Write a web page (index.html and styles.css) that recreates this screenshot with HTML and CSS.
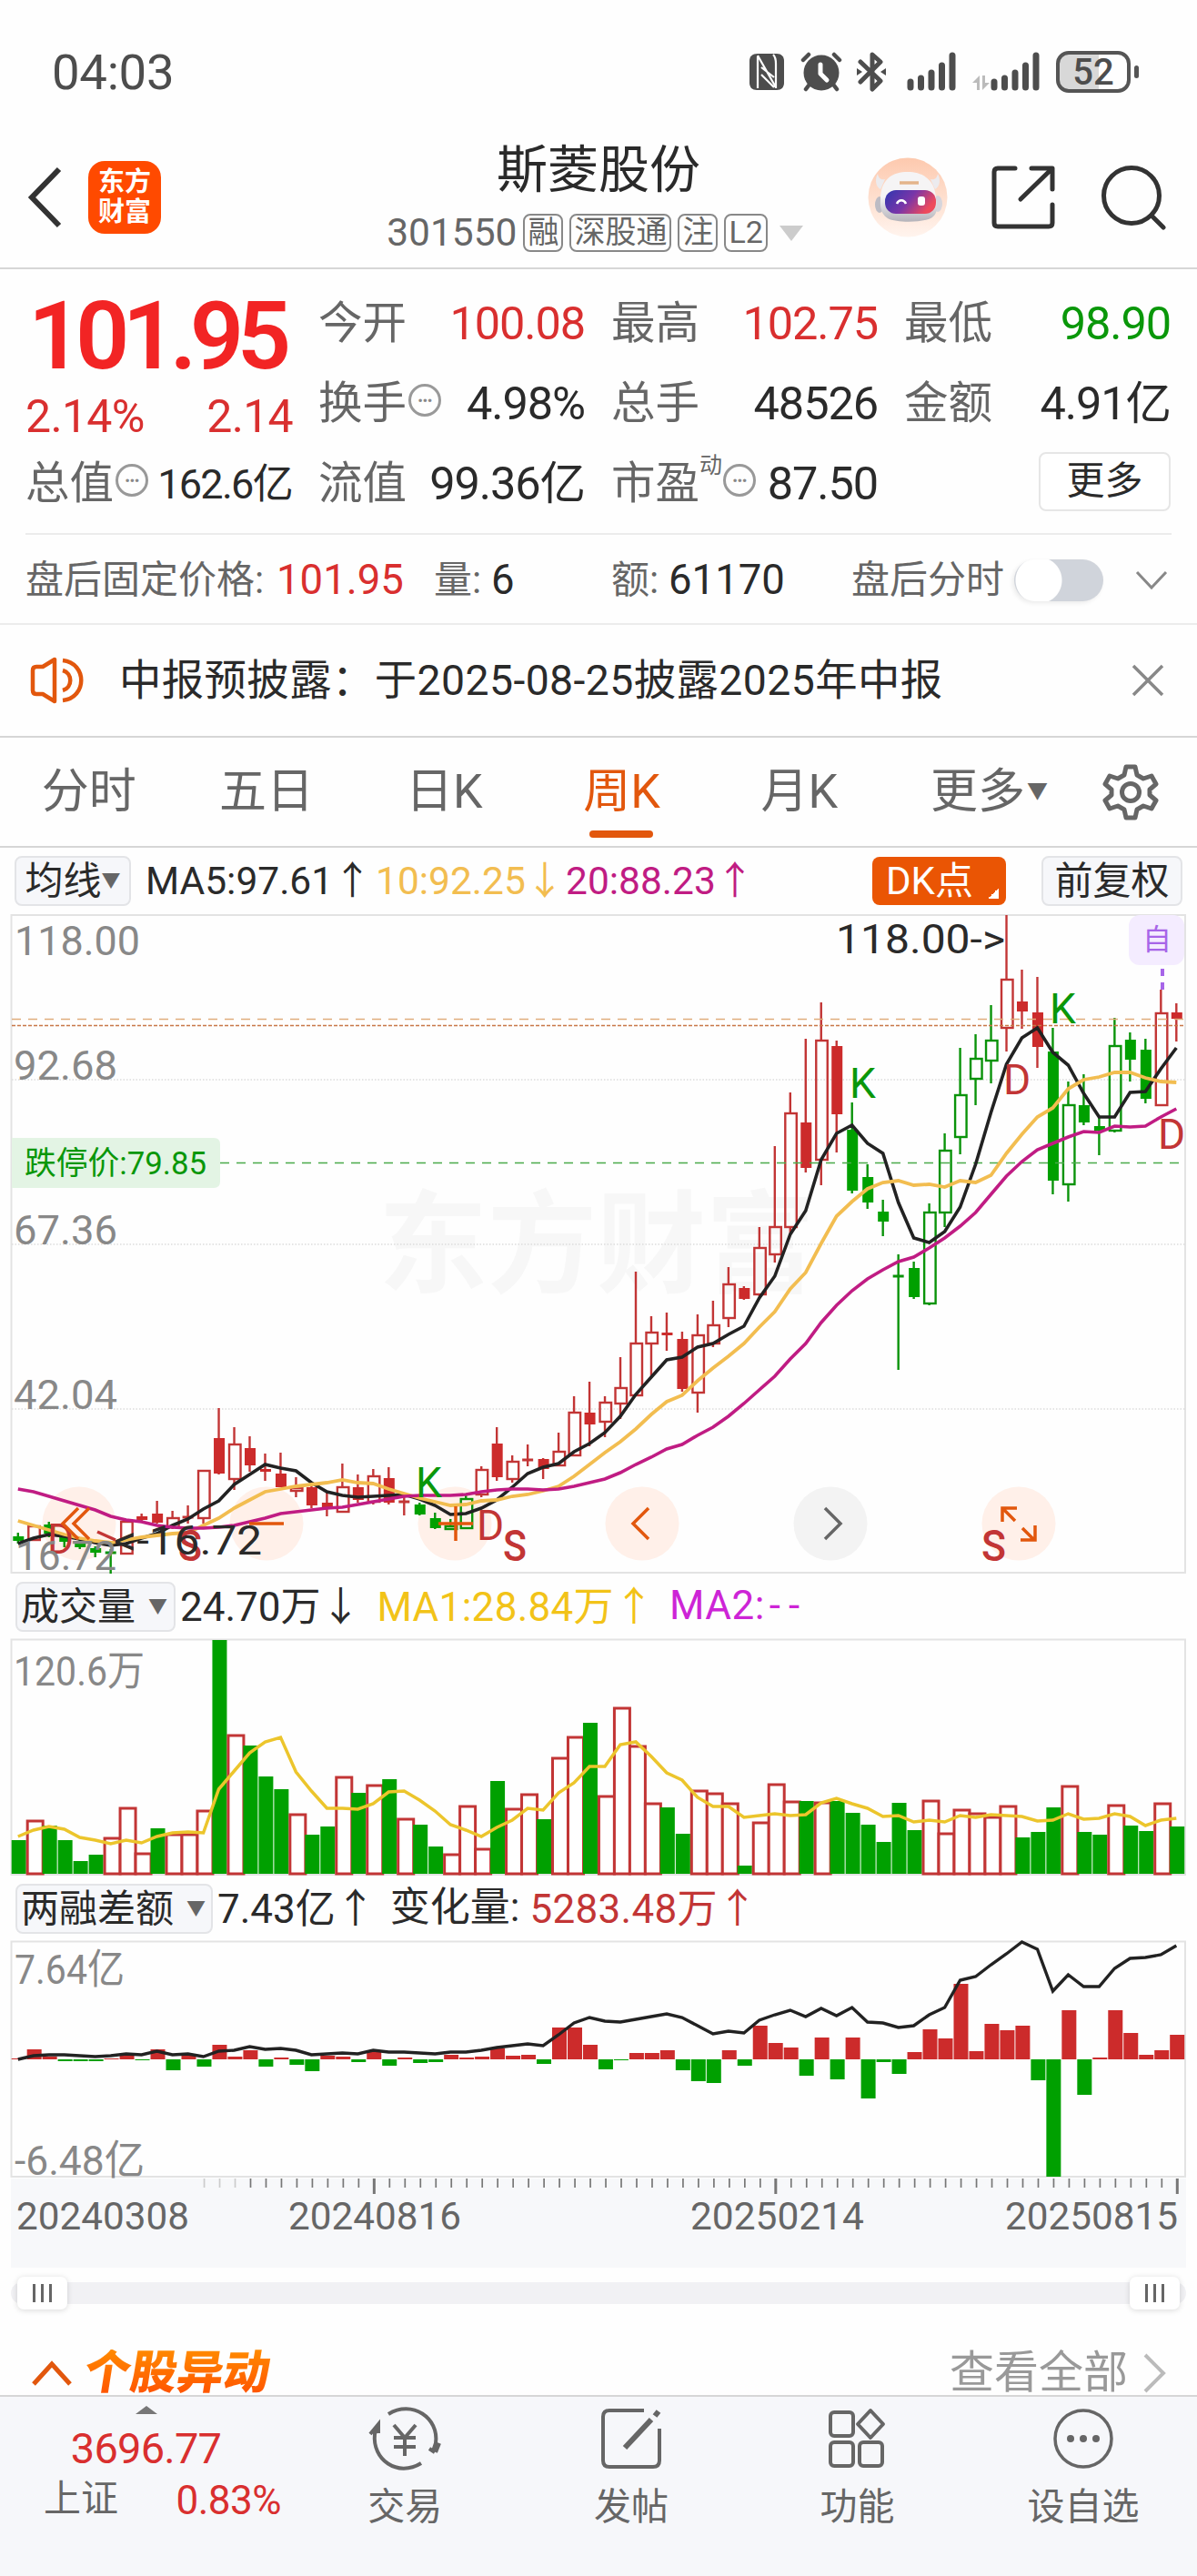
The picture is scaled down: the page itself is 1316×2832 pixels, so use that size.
FILE: index.html
```html
<!DOCTYPE html>
<html lang="zh-CN">
<head>
    <meta charset="UTF-8">
    <title>斯菱股份 301550</title>
    <link rel="stylesheet" href="styles.css">
</head>
<body>
    <div class="status">
        <span class="time">04:03</span>
        <svg class="nfc" width="40" height="42" viewBox="0 0 40 42">
            <path fill="#4d4d4d" d="M10 1h21c5 0 8 3 8 8v24c0 5-3 8-8 8H9c-5 0-8-3-8-8V9c0-5 3-8 9-8z"/>
            <path stroke="#fff" stroke-width="2.200" fill="none" d="M10 4v35M30 39V12c0-5-1-8-3-10M10 3l20 35M14 16l14 11M14 24l14 14"/>
        </svg>
        <svg class="alarm" width="46" height="44" viewBox="0 0 46 44">
            <circle cx="23" cy="23" r="19.500" fill="#4d4d4d"/>
            <path stroke="#4d4d4d" stroke-width="4.500" stroke-linecap="round" fill="none" d="M3 9l6-6M43 9l-6-6M9 37l-3 4M37 37l3 4"/>
            <path stroke="#fff" stroke-width="5" stroke-linecap="round" stroke-linejoin="round" fill="none" d="M22 14v10l7 7"/>
        </svg>
        <svg class="bt" width="32" height="44" viewBox="0 0 32 44">
            <path stroke="#4d4d4d" stroke-width="5" stroke-linejoin="round" stroke-linecap="round" fill="none" d="M4 11l22 21-9 9V3l9 8L4 33"/>
            <path fill="#4d4d4d" d="M0 18l6 4-6 4zM32 18l-6 4 6 4z"/>
        </svg>
        <svg class="sig" width="54" height="44" viewBox="0 0 54 44">
            <path stroke="#4d4d4d" stroke-width="7" stroke-linecap="round" d="M4 33v6M15.500 29v10M27 23v16M38.500 15v24M50 4v35"/>
        </svg>
        <svg class="sig2" width="74" height="44" viewBox="0 0 74 44">
            <path fill="#bbb" d="M0 34l8-8v16H5v-8zM11 26h3v8h5l-8 8z"/>
            <path stroke="#4d4d4d" stroke-width="7" stroke-linecap="round" d="M24 33v6M35.500 29v10M47 23v16M58.500 15v24M70 4v35"/>
        </svg>
        <span class="battery">52</span><i class="nub"></i>
    </div>

    <div class="head">
        <svg class="back" width="40" height="68" viewBox="0 0 40 68">
            <path fill="none" stroke="#333" stroke-width="6" d="M35 3L5 34l30 31"/>
        </svg>
        <div class="logo">东方<br>财富</div>
        <div class="name">
            <h1>斯菱股份</h1>
            <div class="code">301550<b>融</b><b>深股通</b><b>注</b><b>L2</b><i class="tri"></i></div>
        </div>
        <svg class="robot" width="88" height="88" viewBox="0 0 88 88">
            <defs>
                <linearGradient id="halo" x1="0" y1="0" x2="0" y2="1"><stop offset="0" stop-color="#fdc9ae"/><stop offset="1" stop-color="#fff4ee"/></linearGradient>
                <linearGradient id="face" x1="0" y1="0" x2="1" y2=".4"><stop offset="0" stop-color="#2f37b0"/><stop offset=".55" stop-color="#7a35a8"/><stop offset="1" stop-color="#ee4a5c"/></linearGradient>
                <linearGradient id="shell" x1="0" y1="0" x2="0" y2="1"><stop offset=".5" stop-color="#f5f4f5"/><stop offset="1" stop-color="#b4b3ba"/></linearGradient>
            </defs>
            <circle cx="44" cy="44" r="43.500" fill="url(#halo)"/>
            <ellipse cx="13" cy="52" rx="5" ry="9" fill="#bdbcc4"/>
            <ellipse cx="77" cy="51" rx="5" ry="9" fill="#d6d5dc"/>
            <path d="M14 35c-6-3-6-12-3-17 1 5 3 7 8 6zM74 35c6-3 6-12 3-17-1 5-3 7-8 6z" fill="#ecebee"/>
            <path d="M14 47c0-24 14-31 30-31s31 8 31 31c3 14-2 18-6 20-10 5-38 5-47 0-5-3-9-9-8-20z" fill="url(#shell)"/>
            <rect x="19" y="36" width="56" height="26" rx="12" fill="url(#face)"/>
            <path d="M32 51c2-5 8-5 10 0" fill="none" stroke="#fff" stroke-width="2.500"/>
            <rect x="55" y="43" width="8" height="10" rx="3" fill="#fff"/>
            <path d="M35 28h21" stroke="#e3b48a" stroke-width="3.500"/>
        </svg>
        <svg class="share" width="70" height="70" viewBox="0 0 70 70">
            <path fill="none" stroke="#333" stroke-width="5" stroke-linejoin="round" stroke-linecap="round" d="M26 3H7q-4 0-4 4v56q0 4 4 4h56q4 0 4-4V43M44 3h23v23M66 4L32 37"/>
        </svg>
        <svg class="search" width="72" height="72" viewBox="0 0 72 72">
            <circle cx="33" cy="33" r="30.500" fill="none" stroke="#333" stroke-width="5"/>
            <path stroke="#333" stroke-width="5" stroke-linecap="round" d="M55 55l13 13"/>
        </svg>
    </div>

    <div class="quote">
        <div class="price">
            <strong>101.95</strong>
            <p><span>2.14%</span><span>2.14</span></p>
        </div>
        <div class="cell"><label>今开</label><span class="red">100.08</span></div>
        <div class="cell"><label>最高</label><span class="red">102.75</span></div>
        <div class="cell"><label>最低</label><span class="green">98.90</span></div>
        <div class="cell"><label>换手<i class="info">•••</i></label><span>4.98%</span></div>
        <div class="cell"><label>总手</label><span>48526</span></div>
        <div class="cell"><label>金额</label><span>4.91亿</span></div>
        <div class="cell"><label>总值<i class="info">•••</i></label><span class="small">162.6亿</span></div>
        <div class="cell"><label>流值</label><span>99.36亿</span></div>
        <div class="cell"><label>市盈<sup>动</sup><i class="info">•••</i></label><span>87.50</span></div>
        <div class="cell end"><button class="more">更多</button></div>
    </div>

    <div class="after">
        <label class="a1">盘后固定价格:</label><span class="a2 red">101.95</span>
        <label class="a3">量:</label><span class="a4">6</span>
        <label class="a5">额:</label><span class="a6">61170</span>
        <label class="a7">盘后分时</label><i class="toggle"></i>
        <svg width="36" height="22" viewBox="0 0 36 22"><path fill="none" stroke="#888" stroke-width="3" d="M2 2l16 17L34 2"/></svg>
    </div>

    <div class="notice">
        <svg width="60" height="52" viewBox="0 0 60 52">
            <path fill="none" stroke="#e2570d" stroke-width="4.500" stroke-linejoin="round" d="M3 15q0-4 4-4h7L27 3v46L14 41H7q-4 0-4-4zM36 15c11 3 11 19 0 22M36 4c27 3 27 41 0 44"/>
        </svg>
        <span>中报预披露：于2025-08-25披露2025年中报</span>
        <svg width="36" height="36" viewBox="0 0 36 36"><path stroke="#888" stroke-width="3.500" d="M2 2l32 32M34 2L2 34"/></svg>
    </div>

    <div class="tabs">
        <span>分时</span><span>五日</span><span>日K</span><span class="on">周K</span><span>月K</span><span>更多<i>▼</i></span>
        <svg width="64" height="64" viewBox="0 0 64 64">
            <path fill="none" stroke="#666" stroke-width="5" stroke-linejoin="round" d="M27 4h10l2 9 7 4 9-3 5 9-7 6v6l7 6-5 9-9-3-7 4-2 9H27l-2-9-7-4-9 3-5-9 7-6v-6l-7-6 5-9 9 3 7-4z"/>
            <circle cx="32" cy="32" r="9.500" fill="none" stroke="#666" stroke-width="5"/>
        </svg>
    </div>

    <div class="bar ma">
        <button>均线<i>▼</i></button>
        <span class="m5">MA5:97.61<u>↑</u></span>
        <span class="m10">10:92.25<u>↓</u></span>
        <span class="m20">20:88.23<u>↑</u></span>
        <button class="dk">DK点</button>
        <button class="fq">前复权</button>
    </div>
    <svg id="kline" class="chart" width="1316" height="726" viewBox="0 1005 1316 726"></svg>

    <div class="bar vol">
        <button>成交量<i>▼</i></button>
        <span>24.70万<u>↓</u></span>
        <span class="v1">MA1:28.84万<u>↑</u></span>
        <span class="v2">MA2:<em>--</em></span>
    </div>
    <svg id="volume" class="chart" width="1316" height="262" viewBox="0 1801 1316 262"></svg>

    <div class="bar diff">
        <button>两融差额<i>▼</i></button>
        <span>7.43亿<u>↑</u></span>
        <span class="d1">变化量:</span>
        <span class="d2">5283.48万<u>↑</u></span>
    </div>
    <svg id="margin" class="chart" width="1316" height="360" viewBox="0 2133 1316 360"></svg>

    <div class="slider"><i></i><i></i></div>

    <div class="title">
        <svg width="46" height="30" viewBox="0 0 46 30"><path fill="none" stroke="#e2570d" stroke-width="5" d="M3 27L23 5l20 22"/></svg>
        <h2>个股异动</h2>
        <span>查看全部</span>
        <svg class="go" width="26" height="44" viewBox="0 0 26 44"><path fill="none" stroke="#bbb" stroke-width="4" d="M3 2l20 20L3 42"/></svg>
    </div>

    <div class="nav">
        <div class="index">
            <i></i>
            <b>3696.77</b>
            <p><span>上证</span><em>0.83%</em></p>
        </div>
        <div class="item">
            <svg width="80" height="70" viewBox="0 0 80 70">
                <g fill="none" stroke="#666" stroke-width="4">
                    <path d="M22 8c26-16 56 4 52 32l-3 9M74 50l4-10M73 50l-6-4M58 62C32 78 4 58 7 30l3-9M2 30l9-11v10"/>
                    <path d="M28 20l12 14 12-14M40 34v20M28 34h24M28 44h24"/>
                </g>
            </svg>
            <span>交易</span>
        </div>
        <div class="item">
            <svg width="80" height="70" viewBox="0 0 80 70">
                <path fill="none" stroke="#666" stroke-width="4" d="M54 4H16q-7 0-7 7v48q0 7 7 7h48q7 0 7-7V24"/>
                <path stroke="#666" stroke-width="6" d="M33 45L62 14M66 10l4-5"/>
            </svg>
            <span>发帖</span>
        </div>
        <div class="item">
            <svg width="80" height="70" viewBox="0 0 80 70">
                <g fill="none" stroke="#666" stroke-width="4">
                    <rect x="11" y="6" width="25" height="26" rx="4"/><rect x="11" y="39" width="25" height="26" rx="4"/><rect x="43" y="39" width="25" height="26" rx="4"/>
                    <path stroke-linejoin="round" d="M55 4l14 15-14 15-14-15z"/>
                </g>
            </svg>
            <span>功能</span>
        </div>
        <div class="item">
            <svg width="80" height="70" viewBox="0 0 80 70">
                <circle cx="40" cy="35" r="31" fill="none" stroke="#666" stroke-width="3.500"/>
                <g fill="#666"><circle cx="26" cy="35" r="4"/><circle cx="40" cy="35" r="4"/><circle cx="54" cy="35" r="4"/></g>
            </svg>
            <span>设自选</span>
        </div>
    </div>
    <script src="chart.js"></script>
</body>
</html>
```
FILE: styles.css
```css
* {
    box-sizing: border-box;
}
body {
    margin: 0;
    width: 1316px;
    height: 2832px;
    overflow: hidden;
    background: #fefefe;
    color: #2a2a2a;
    font-family: Roboto, "Noto Sans CJK SC", sans-serif;
    line-height: 1;
}
h1, h2, p {
    margin: 0;
    font-weight: normal;
}
i, em {
    font-style: normal;
}
u {
    text-decoration: none;
}
button {
    font-family: inherit;
    color: inherit;
    padding: 0;
    margin: 0;
    white-space: nowrap;
}
span, label {
    white-space: nowrap;
}
svg {
    display: block;
    flex: none;
}
.red { color: #d92f2f; }
.green { color: #0a970a; }

/* status bar */
.status {
    display: flex;
    align-items: center;
    height: 157px;
    padding-left: 57px;
    color: #4d4d4d;
}
.time {
    width: 766px;
    font-size: 54.500px;
    letter-spacing: -0.3px;
    padding-top: 2px;
}
.alarm { margin-left: 17px; }
.bt { margin-left: 16px; }
.sig { margin-left: 23px; }
.sig2 { margin-left: 18px; }
.battery {
    width: 82px;
    height: 46px;
    margin-left: 18px;
    border: 4px solid #555;
    border-radius: 14px;
    background: linear-gradient(90deg, #d8d8d8 58%, #fefefe 58%);
    text-align: center;
    font-size: 40px;
    font-weight: 500;
    line-height: 40px;
}
.nub {
    width: 5px;
    height: 14px;
    margin-left: 4px;
    border-radius: 3px;
    background: #555;
}

/* header */
.head {
    display: flex;
    align-items: center;
    height: 139px;
    padding-left: 30px;
    border-bottom: 2px solid #d6d6d6;
}
.back { margin-top: -17px; }
.logo {
    width: 80px;
    height: 80px;
    margin: -17px 0 0 27px;
    padding-top: 7px;
    border-radius: 18px;
    background: #ff4a00;
    color: #fff;
    font-size: 29px;
    font-weight: 700;
    line-height: 33px;
    text-align: center;
}
.name {
    width: 530px;
    margin-left: 212px;
    align-self: flex-start;
    padding-top: 1px;
}
.name h1 {
    width: 538px;
    text-align: center;
    font-size: 56px;
    line-height: 58px;
}
.code {
    display: flex;
    align-items: center;
    justify-content: center;
    margin-top: 18px;
    height: 44px;
    font-size: 42.500px;
    color: #666;
}
.code b {
    height: 42px;
    margin-left: 7px;
    padding: 0 3px;
    border: 2px solid #888;
    border-radius: 8px;
    font-size: 34px;
    font-weight: normal;
    line-height: 37px;
}
.tri {
    margin-left: 13px;
    border: 13px solid transparent;
    border-top: 17px solid #ccc;
    border-bottom: 0;
}
.robot { margin: -17px 0 0 35px; }
.share { margin: -17px 0 0 48px; }
.search { margin: -15px 0 0 51px; }

/* quote grid */
.quote {
    display: grid;
    grid-template-columns: repeat(4, 291px);
    grid-template-rows: 88px 88px 88px;
    column-gap: 31px;
    height: 292px;
    margin: 0 28px;
    padding-top: 15px;
    border-bottom: 2px solid #ececec;
}
.price {
    grid-row: span 2;
    color: #f22424;
}
.price strong {
    display: block;
    padding: 17px 0 0 3px;
    font-size: 104px;
    font-weight: 600;
    line-height: 84px;
    letter-spacing: -7.500px;
}
.price p {
    display: flex;
    justify-content: space-between;
    margin: 20px -3px 0 0;
    color: #d92f2f;
    font-size: 50px;
    line-height: 52px;
    letter-spacing: -0.7px;
}
.cell {
    display: flex;
    align-items: center;
    justify-content: space-between;
    margin-right: -2px;
    padding-top: 2px;
    font-size: 50.500px;
    letter-spacing: -1.1px;
}
.cell.end { justify-content: flex-end; padding-top: 0; }
.cell label {
    position: relative;
    display: flex;
    align-items: center;
    font-size: 48.500px;
    letter-spacing: 0;
    color: #666;
}
.cell .small {
    font-size: 45px;
    letter-spacing: -1.7px;
}
.info {
    width: 36px;
    height: 36px;
    margin: -8px 0 0 2px;
    border: 3px solid #999;
    border-radius: 50%;
    color: #888;
    font-size: 17px;
    line-height: 30px;
    letter-spacing: -0.500px;
    text-align: center;
}
.cell sup {
    align-self: flex-start;
    width: 24px;
    margin-top: -9px;
    font-size: 25px;
    line-height: 25px;
}
.more {
    width: 145px;
    height: 65px;
    border: 2px solid #e6e6e6;
    border-radius: 8px;
    background: #fff;
    font-size: 42px;
    line-height: 54px;
    margin-top: -4px;
}

/* after-hours row */
.after {
    display: flex;
    align-items: center;
    height: 99px;
    padding: 3px 0 0 28px;
    border-bottom: 2px solid #ececec;
    font-size: 45.500px;
}
.after label {
    font-size: 42px;
    color: #666;
}
.a1 { width: 276px; }
.a2 { width: 173px; }
.after .a3, .after .a5 { width: 63px; }
.a4 { width: 132px; }
.a6 { width: 201px; }
.a7 { width: 179px; }
.toggle {
    width: 98px;
    height: 46px;
    margin-right: 35px;
    border-radius: 23px;
    background: radial-gradient(circle at 27px 23px, #fff 25px, transparent 26px), #d0d4db;
    box-shadow: -2px 2px 5px rgba(0, 0, 0, .08);
}

/* announcement */
.notice {
    display: flex;
    align-items: center;
    height: 124px;
    padding-left: 33px;
    border-bottom: 2px solid #d6d6d6;
}
.notice span {
    width: 1113px;
    margin-left: 38px;
    font-size: 46.400px;
    letter-spacing: .4px;
}

/* period tabs */
.tabs {
    display: flex;
    align-items: center;
    height: 121px;
    border-bottom: 2px solid #d6d6d6;
    color: #666;
    font-size: 52px;
}
.tabs span {
    position: relative;
    width: 195.300px;
    text-align: center;
}
.tabs span:nth-child(6) { width: 222px; }
.tabs svg { margin-left: 13px; }
.tabs i {
    font-size: 23px;
    vertical-align: 10px;
    margin-left: 2px;
}
.tabs .on { color: #e2570d; }
.tabs .on::after {
    content: "";
    position: absolute;
    left: 62px;
    bottom: -24px;
    width: 70px;
    height: 8px;
    border-radius: 4px;
    background: #e2570d;
}

/* indicator bars */
.bar {
    display: flex;
    align-items: center;
    height: 70px;
    padding-left: 17px;
    font-size: 44px;
}
.bar button {
    height: 55px;
    border: 2px solid #e3e4e7;
    border-radius: 8px;
    background: #f6f7fa;
    font-size: 42px;
    line-height: 48px;
}
.bar i {
    color: #666;
    font-size: 21px;
    vertical-align: 8px;
}
.bar u {
    display: inline-block;
    width: 42px;
    text-align: center;
    font-family: "Noto Sans CJK SC", sans-serif;
}
.bar span { margin-top: -2px; }
.ma {
    height: 73px;
    font-size: 42.500px;
}
.ma button { width: 128px; margin-left: -1px; }
.ma u { width: 36px; }
.m5 { width: 253px; margin-left: 16px; }
.m10 { width: 209px; color: #f2bd50; }
.m20 { width: 338px; color: #c01c83; }
.bar .dk {
    width: 147px;
    height: 53px;
    border: 0;
    background: linear-gradient(135deg, transparent 50%, #fff 50%) 126px 35px / 13px 11px no-repeat, #ea5504;
    color: #fff;
    text-align: left;
    padding-left: 15px;
}
.bar .fq { width: 155px; margin-left: 39px; }
.vol { height: 70px; }
.vol button { width: 176px; margin-right: 5px; text-align: left; padding-left: 4px; }
.vol i, .diff i { margin-left: 14px; }
.v1 { margin-left: 20px; color: #f2c318; letter-spacing: .3px; }
.v2 { margin-left: 19px; color: #cd24d6; letter-spacing: .5px; }
.v2 em { letter-spacing: 9px; margin-left: 5px; }
.diff button { width: 217px; margin-right: 5px; text-align: left; padding-left: 4px; }
.d1 { margin-left: 18px; }
.d2 { margin-left: 11px; color: #c23535; letter-spacing: .3px; }

/* charts */
.chart text {
    font-family: Roboto, "Noto Sans CJK SC", sans-serif;
    font-size: 45px;
}
.chart .axis { fill: #888; }
.chart .date { fill: #666; font-size: 43px; }
.chart .dark { fill: #2a2a2a; }
.chart .k { fill: #0a970a; font-size: 46px; }
.chart .d { fill: #c23535; font-size: 46px; }
.chart .s { fill: #c23535; font-size: 48px; font-weight: 500; }
.chart .limit { fill: #0a970a; font-size: 35.500px; }
.chart .self { fill: #a765e8; font-size: 32px; }
.chart .mark { fill: #f7f7f7; font-size: 122px; font-weight: 700; }

/* range slider */
.slider {
    display: flex;
    justify-content: space-between;
    align-items: center;
    height: 24px;
    margin: 16px 12px 0;
    padding: 0 7px;
    border-radius: 12px;
    background: #f1f1f4;
}
.slider i {
    width: 55px;
    height: 36px;
    border-radius: 7px;
    background: repeating-linear-gradient(90deg, #666 0 3px, transparent 3px 9px) 17px 8px / 21px 20px no-repeat, #fff;
    box-shadow: 0 1px 6px rgba(0, 0, 0, .15);
}

/* section title */
.title {
    display: flex;
    align-items: center;
    height: 100px;
    padding: 51px 34px 0 34px;
}
.title h2 {
    margin-left: 13px;
    font-size: 51px;
    font-weight: 900;
    transform: skewX(-9deg);
    background: linear-gradient(#ff8a00, #ff5200);
    -webkit-background-clip: text;
    color: transparent;
}
.title span {
    margin-left: auto;
    font-size: 49px;
    color: #999;
}
.go { margin-left: 16px; }

/* bottom navigation */
.nav {
    display: flex;
    height: 199px;
    border-top: 2px solid #d6d6d6;
    background: #f6f7fa;
    color: #666;
    font-size: 41px;
}
.index {
    width: 321px;
    display: flex;
    flex-direction: column;
    align-items: center;
}
.index i {
    margin-top: 10px;
    border: 12px solid transparent;
    border-top: 0;
    border-bottom: 9px solid #777;
}
.index b {
    margin-top: 14px;
    font-size: 47px;
    font-weight: normal;
    color: #d92f2f;
    letter-spacing: -0.800px;
}
.index p {
    display: flex;
    width: 100%;
    justify-content: space-between;
    padding: 0 12px 0 48px;
    margin-top: 12px;
}
.index em {
    font-size: 44px;
    color: #d92f2f;
    letter-spacing: -0.500px;
}
.item {
    width: 248.600px;
    display: flex;
    flex-direction: column;
    align-items: center;
    padding-top: 11px;
}
.item span { margin-top: 20px; }
```
FILE: chart.js
```js
var X0 = 19.8, STEP = 16.98;
var RED = '#c23535', UP = '#cc2b2b', GREEN = '#0a930a', DOWN = '#00a000';

// kind, high, body top, body bottom, low (lower case = hollow body)
var candles = [
    'G 1685 1689 1694 1697', 'r 1676 1678 1693 1693', 'G 1673 1676 1686 1690', 'G 1690 1690 1695 1701', 'G 1693 1695 1701 1703',
    'G 1700 1702 1707 1712', 'G 1703 1707 1708 1730', 'r 1673 1673 1708 1708', 'R 1664 1667 1671 1673', 'R 1650 1664 1674 1675',
    'r 1661 1669 1679 1681', 'r 1655 1668 1669 1675', 'r 1616 1617 1669 1675', 'R 1548 1581 1620 1621', 'r 1569 1588 1626 1638',
    'R 1579 1592 1611 1618', 'R 1598 1615 1618 1628', 'R 1597 1620 1635 1635', 'r 1624 1636 1639 1646', 'R 1632 1635 1655 1658',
    'R 1640 1652 1659 1667', 'r 1609 1635 1662 1663', 'R 1621 1635 1649 1652', 'r 1615 1623 1651 1654', 'R 1613 1625 1652 1654',
    'r 1646 1651 1652 1666', 'G 1652 1654 1665 1666', 'G 1663 1669 1680 1681', 'g 1670 1678 1681 1681', 'g 1644 1648 1680 1681',
    'r 1612 1616 1643 1646', 'R 1569 1587 1624 1628', 'r 1600 1607 1626 1630', 'R 1588 1605 1606 1612', 'R 1603 1604 1615 1626',
    'r 1575 1596 1611 1612', 'r 1535 1553 1600 1600', 'R 1519 1553 1566 1590', 'r 1535 1542 1563 1580', 'r 1492 1526 1543 1560',
    'r 1398 1477 1534 1534', 'r 1447 1465 1477 1513', 'R 1443 1465 1468 1485', 'R 1464 1472 1527 1530', 'r 1445 1468 1531 1553',
    'r 1430 1457 1477 1481', 'r 1393 1412 1449 1459', 'R 1414 1416 1428 1429', 'r 1349 1372 1423 1425', 'r 1260 1349 1379 1388',
    'r 1201 1224 1349 1357', 'R 1142 1234 1284 1289', 'r 1102 1144 1275 1303', 'R 1144 1150 1225 1267', 'G 1212 1242 1309 1312',
    'G 1280 1294 1322 1329', 'G 1319 1332 1343 1359', 'g 1379 1403 1404 1506', 'G 1387 1394 1426 1428', 'g 1323 1333 1433 1435',
    'g 1246 1265 1333 1349', 'g 1152 1204 1250 1269', 'g 1137 1164 1186 1215', 'g 1105 1144 1166 1191', 'r 1006 1077 1130 1156',
    'R 1066 1101 1112 1131', 'R 1074 1113 1151 1174', 'G 1130 1156 1298 1313', 'g 1189 1215 1302 1321', 'G 1181 1215 1234 1237',
    'G 1229 1238 1243 1270', 'g 1119 1150 1243 1245', 'G 1135 1143 1165 1189', 'G 1142 1154 1208 1213', 'r 1088 1114 1215 1216',
    'R 1103 1113 1120 1145'
];
var ma5 = [1697,1691,1687,1689,1692,1696,1699,1697,1691,1686,1677,1670,1659,1650,1632,1621,1610,1614,1617,1630,1640,1644,1646,1645,1644,1643,1648,1655,1665,1664,1658,1649,1635,1620,1613,1609,1596,1587,1575,1557,1533,1514,1495,1492,1481,1477,1467,1458,1427,1403,1357,1331,1275,1246,1237,1257,1268,1322,1361,1366,1354,1327,1280,1223,1170,1141,1130,1157,1171,1202,1228,1228,1201,1200,1175,1152];
var ma10 = [1672,1677,1682,1687,1691,1694,1696,1693,1690,1688,1686,1685,1677,1669,1658,1649,1640,1637,1634,1632,1630,1627,1630,1631,1637,1642,1647,1651,1655,1654,1650,1649,1645,1643,1639,1634,1623,1610,1597,1585,1571,1555,1541,1534,1518,1504,1491,1477,1459,1442,1417,1399,1367,1337,1321,1307,1300,1298,1303,1302,1305,1298,1300,1292,1268,1247,1228,1218,1197,1187,1184,1179,1179,1185,1189,1190];
var ma20 = [1637,1640,1645,1650,1655,1660,1667,1671,1673,1677,1679,1680,1680,1679,1677,1673,1669,1664,1662,1660,1658,1657,1654,1651,1648,1645,1644,1644,1644,1643,1640,1638,1637,1637,1638,1637,1634,1630,1626,1619,1610,1602,1593,1588,1578,1569,1557,1543,1528,1513,1494,1477,1454,1435,1419,1406,1396,1387,1382,1372,1361,1348,1333,1313,1293,1277,1264,1257,1250,1244,1245,1238,1239,1238,1228,1219];

// positive = hollow red bar, negative = green bar
var vols = [-2023,2002,-2007,-2023,-2046,-2039,2021,1988,2038,-2010,2017,2017,1991,-1803,1908,-1919,-1953,-1967,1995,-2017,-2008,1954,-1971,1963,-1956,2000,-2006,-2030,2039,1986,2033,-1958,1989,1973,-2000,1933,1910,-1894,1975,1878,1920,1983,-1987,-2016,1969,1972,1983,-2051,2004,1962,1981,-1980,1982,-1980,-1993,-2006,-2025,-1982,-2012,1980,2016,1990,1994,1998,1986,-2020,-2014,-1987,1964,-2014,-2017,1985,-2007,-2013,1983,-2008];
var volMa = [2019,2012,2008,2011,2020,2023,2027,2023,2026,2019,2015,2014,2015,1967,1947,1927,1915,1910,1948,1969,1988,1988,1989,1983,1970,1969,1979,1991,2006,2012,2019,2009,2001,1988,1990,1971,1960,1942,1942,1918,1915,1931,1949,1957,1976,1986,1986,1998,1996,1994,1996,1995,1982,1977,1983,1988,1997,1996,2003,2001,2003,1996,1998,1995,1996,1997,2002,2001,1994,2000,1999,1994,1997,2007,2001,1999];

var diffs = [1,11,3,-2,-2,-2,1,4,-1,11,-12,5,-8,16,3,10,-8,2,-6,-13,4,3,-3,10,-7,2,-4,-3,5,2,3,12,4,5,-5,35,35,16,-11,-1,7,7,10,-12,-24,-26,10,-7,37,18,13,-18,24,-22,24,-43,-3,-16,8,33,23,83,9,39,32,37,-23,-129,54,-39,2,54,29,5,10,27];
var diffLine = [2264,2260,2259,2259,2260,2261,2260,2258,2259,2255,2259,2258,2261,2255,2254,2250,2253,2252,2254,2259,2258,2257,2258,2254,2256,2256,2257,2258,2256,2256,2254,2251,2249,2247,2249,2237,2224,2218,2222,2223,2220,2217,2214,2218,2227,2236,2233,2235,2221,2215,2210,2217,2208,2216,2207,2223,2224,2229,2227,2215,2207,2177,2173,2160,2148,2135,2143,2189,2171,2184,2184,2164,2153,2152,2149,2139];

function px(i) { return X0 + i * STEP; }
function path(ys, color, w) {
    return '<polyline fill="none" stroke="' + color + '" stroke-width="' + w + '" points="' +
        ys.map(function (y, i) { return px(i).toFixed(1) + ',' + y; }).join(' ') + '"/>';
}
function line(x1, y1, x2, y2, color, w, dash) {
    return '<line x1="' + x1 + '" y1="' + y1 + '" x2="' + x2 + '" y2="' + y2 + '" stroke="' + color +
        '" stroke-width="' + w + '"' + (dash ? ' stroke-dasharray="' + dash + '"' : '') + '/>';
}
function rect(x, y, w, h, fill, stroke, sw) {
    return '<rect x="' + x + '" y="' + y + '" width="' + w + '" height="' + h + '" fill="' + fill + '"' +
        (stroke ? ' stroke="' + stroke + '" stroke-width="' + (sw || 2) + '"' : '') + '/>';
}
function text(x, y, cls, s, len) {
    return '<text x="' + x + '" y="' + y + '" class="' + cls + '"' +
        (len ? ' textLength="' + len + '" lengthAdjust="spacingAndGlyphs"' : '') + '>' + s + '</text>';
}
function stroke(d, color) {
    return '<path fill="none" stroke="' + color + '" stroke-width="3.5" d="' + d + '"/>';
}

// weekly candles
var k = rect(12.5, 1006, 1290.5, 723, 'none', '#e3e3e3');
k += text(416, 1411, 'mark', '东方财富', 480);
[1187, 1368, 1549].forEach(function (y) { k += line(13, y, 1303, y, '#ddd', 1.5, '1.5 2'); });
[87, 293, 500, 706, 913, 1120].forEach(function (x) {
    k += '<circle cx="' + x + '" cy="1675" r="40.500" fill="' + (x == 913 ? '#f3f3f3' : '#fff0e9') + '"/>';
});
candles.forEach(function (c, i) {
    var v = c.split(' '), t = v[0], x = px(i), y1 = +v[2], y2 = +v[3];
    var red = t == 'r' || t == 'R', hollow = t == 'r' || t == 'g';
    var col = red ? RED : GREEN;
    k += line(x, v[1], x, y1, col, 2.4) + line(x, y2, x, v[4], col, 2.4);
    if (y2 - y1 < 2) k += line(x - 6, y1, x + 6, y1, col, 3);
    else if (hollow) k += rect(x - 5.5, y1, 12.5, y2 - y1, 'none', col, 2.4);
    else k += rect(x - 5.5, y1, 12, y2 - y1, red ? UP : DOWN);
});
k += line(13, 1120.5, 1303, 1120.5, '#e0ad7c', 1.5, '10 8');
k += line(13, 1127.5, 1303, 1127.5, '#c87848', 1.5, '4 2');
k += line(242, 1278.5, 1297, 1278.5, '#4aaa4a', 1.7, '10 8');
k += path(ma5, '#222', 3.6) + path(ma10, '#f2bd50', 3.8) + path(ma20, '#c01c83', 3.6);
k += '<path fill="#e3f4e4" d="M13 1251h222q7 0 7 7v41q0 7-7 7H13z"/>' + text(27, 1291, 'limit', '跌停价:79.85', 200);
k += text(16, 1050, 'axis', '118.00', 138) + text(15, 1187, 'axis', '92.68', 114) + text(15, 1368, 'axis', '67.36', 114) + text(15, 1549, 'axis', '42.04', 114);
k += text(52, 1708, 'd', 'D', 29) + text(196, 1716, 's', 'S', 26);
k += text(17, 1726, 'axis', '16.72', 111) + text(125, 1709, 'dark', '&lt;-16.72', 163);
k += text(919, 1048, 'dark', '118.00-&gt;', 186);
k += text(934, 1207, 'k', 'K') + text(1154, 1125, 'k', 'K') + text(457, 1646, 'k', 'K');
k += text(1103, 1203, 'd', 'D') + text(1273, 1263, 'd', 'D') + text(524, 1693, 'd', 'D');
k += text(553, 1716, 's', 'S', 26) + text(1079, 1716, 's', 'S', 27);
k += '<rect x="1241" y="1006" width="61" height="55" rx="12" fill="#f4ecff"/>' + text(1256, 1044, 'self', '自') + line(1278, 1065, 1278, 1088, '#a765e8', 4, '8 7');
k += stroke('M86 1658l-17 17 17 17M98 1658l-17 17 17 17M274 1675h38M482 1675h38M501 1656v38M713 1658l-17 17 17 17M1102 1673v-15h16M1103 1659l13 13M1122 1693h16v-16M1124 1680l13 13', '#e2570d');
k += stroke('M907 1658l17 17-17 17', '#666') + stroke('M107 1684l20 9', RED);
document.getElementById('kline').innerHTML = k;

// volume
var v = rect(12.5, 1802.5, 1290.5, 258.5, 'none', '#e3e3e3') + text(15, 1853, 'axis', '120.6万', 144);
vols.forEach(function (t, i) {
    var x = 12.7 + i * STEP, y = Math.abs(t);
    if (t < 0) v += rect(x, y, 16, 2060 - y, DOWN);
    else v += rect(x + 0.5, y, 17, 2060 - y, '#fff', RED, 3);
});
v += path(volMa, '#ecc52c', 3.5);
document.getElementById('volume').innerHTML = v;

// margin balance difference and time axis
var m = rect(12, 2395, 1292, 98, '#f7f8fa') + rect(12.5, 2134.5, 1290.5, 258.5, 'none', '#e3e3e3');
m += text(16, 2181, 'axis', '7.64亿', 121) + text(16, 2391, 'axis', '-6.48亿', 143);
diffs.forEach(function (d, i) {
    m += rect(12.7 + i * STEP, d > 0 ? 2264 - d : 2264, 16, Math.abs(d), d > 0 ? UP : DOWN);
});
m += path(diffLine, '#222', 3.4);
for (var i = 12; i < 76; i++) {
    var big = i == 23 || i == 49 || i == 75;
    m += line(px(i) + 1, 2395, px(i) + 1, big ? 2412 : 2405, i < 15 ? '#ccc' : '#777', big ? 3 : 1.7);
}
m += text(18, 2451, 'date', '20240308', 190) + text(317, 2451, 'date', '20240816', 190) + text(759, 2451, 'date', '20250214', 191) + text(1105, 2451, 'date', '20250815', 190);
document.getElementById('margin').innerHTML = m;
```
